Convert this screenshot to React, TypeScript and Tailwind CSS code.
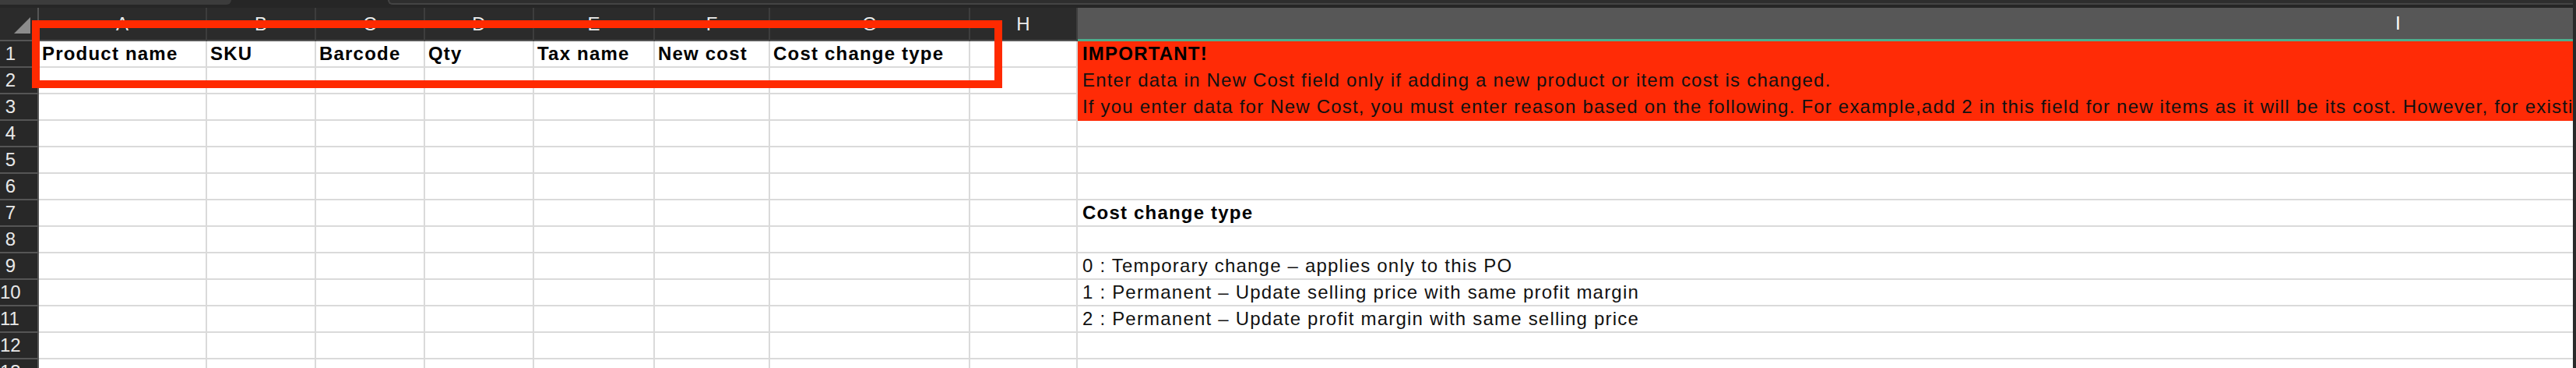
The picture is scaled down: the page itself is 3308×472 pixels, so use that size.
import React from "react";

type Col = { key: string; width: string };

const cols: Col[] = [
  { key: "A", width: "w-[216px]" },
  { key: "B", width: "w-[140px]" },
  { key: "C", width: "w-[140px]" },
  { key: "D", width: "w-[140px]" },
  { key: "E", width: "w-[155px]" },
  { key: "F", width: "w-[148px]" },
  { key: "G", width: "w-[257px]" },
  { key: "H", width: "w-[138px]" },
];

const headers = ["Product name", "SKU", "Barcode", "Qty", "Tax name", "New cost", "Cost change type", ""];

// text in column I, by row number
const notes: Record<number, { text: string; bold?: boolean; red?: boolean }> = {
  1: { text: "IMPORTANT!", bold: true, red: true },
  2: { text: "Enter data in New Cost field only if adding a new product or item cost is changed.", red: true },
  3: {
    text: "If you enter data for New Cost, you must enter reason based on the following. For example,add 2 in this field for new items as it will be its cost. However, for existing items, enter the reason for the change.",
    red: true,
  },
  7: { text: "Cost change type", bold: true },
  9: { text: "0 : Temporary change \u2013 applies only to this PO" },
  10: { text: "1 : Permanent \u2013 Update selling price with same profit margin" },
  11: { text: "2 : Permanent \u2013 Update profit margin with same selling price" },
};

const rows = Array.from({ length: 13 }, (_, i) => i + 1);

function RowNumber({ n }: { n: number }) {
  return (
    <div className="w-[50px] h-[34px] shrink-0 bg-[#282828] border-r-2 border-b-2 border-[#555555] flex items-center">
      <span className="w-[20px] text-right whitespace-nowrap text-[24px] leading-none text-[#e8e8e8] font-light">
        {n}
      </span>
    </div>
  );
}

export default function App() {
  return (
    <div className="relative w-[3308px] h-[472px] overflow-hidden bg-[#282828] font-['Liberation_Sans',Arial,sans-serif]">
      {/* window strip */}
      <div className="h-[10px] flex bg-[#262626]">
        <div className="w-[297px] h-[6px] bg-[#3c3c3c] rounded-br-[8px]" />
        <div className="ml-[201px] flex-1 h-[6px] bg-[#2e2e2e] border-l-2 border-b-2 border-[#444444] rounded-bl-[8px]" />
      </div>

      {/* column headers */}
      <div className="flex h-[43px] w-[3304px]">
        <div className="w-[50px] shrink-0 border-r-2 border-b-2 border-[#555555] bg-[#2b2b2b] flex items-end justify-end pr-[9px] pb-[8px]">
          <svg width="21" height="21" viewBox="0 0 21 21">
            <polygon points="21,0 21,21 0,21" fill="#8c8c8c" />
          </svg>
        </div>
        {cols.map((c) => (
          <div
            key={c.key}
            className={`${c.width} shrink-0 bg-[#2b2b2b] border-r-2 border-r-[#3d3d3d] border-b-2 border-b-[#555555] flex items-center justify-center text-[24px] text-[#ececec] font-light`}
          >
            {c.key}
          </div>
        ))}
        <div className="flex-1 bg-[#575757] border-b-[3px] border-[#4caf8e] flex items-center pl-[1692px] text-[24px] text-white font-light">
          I
        </div>
      </div>

      {/* grid rows */}
      {rows.map((r) => {
        const note = notes[r];
        return (
          <div key={r} className="flex w-[3304px]">
            <RowNumber n={r} />
            {cols.map((c, i) => (
              <div
                key={c.key}
                className={`${c.width} h-[34px] shrink-0 bg-white border-r-2 border-b-2 border-[#dadada] flex items-center pl-[4px] overflow-hidden whitespace-nowrap`}
              >
                {r === 1 && (
                  <span className="text-[24px] font-bold text-black tracking-[1.2px]">{headers[i]}</span>
                )}
              </div>
            ))}
            <div
              className={`flex-1 h-[34px] flex items-center pl-[6px] overflow-hidden whitespace-nowrap border-b-2 ${
                note?.red ? "bg-[#ff2b06] border-[#ff2b06]" : "bg-white border-[#dadada]"
              }`}
            >
              {note && (
                <span
                  className={`text-[24px] tracking-[1.2px] ${note.bold ? "font-bold text-black" : "text-[#111111]"}`}
                >
                  {note.text}
                </span>
              )}
            </div>
          </div>
        );
      })}

      {/* right edge */}
      <div className="absolute right-0 top-0 w-[4px] h-full bg-[#2a2a2a]" />

      {/* highlight box around the header row */}
      <div className="absolute left-[41px] top-[26px] w-[1246px] h-[87px] border-[10px] border-[#ff2a00]" />
    </div>
  );
}
